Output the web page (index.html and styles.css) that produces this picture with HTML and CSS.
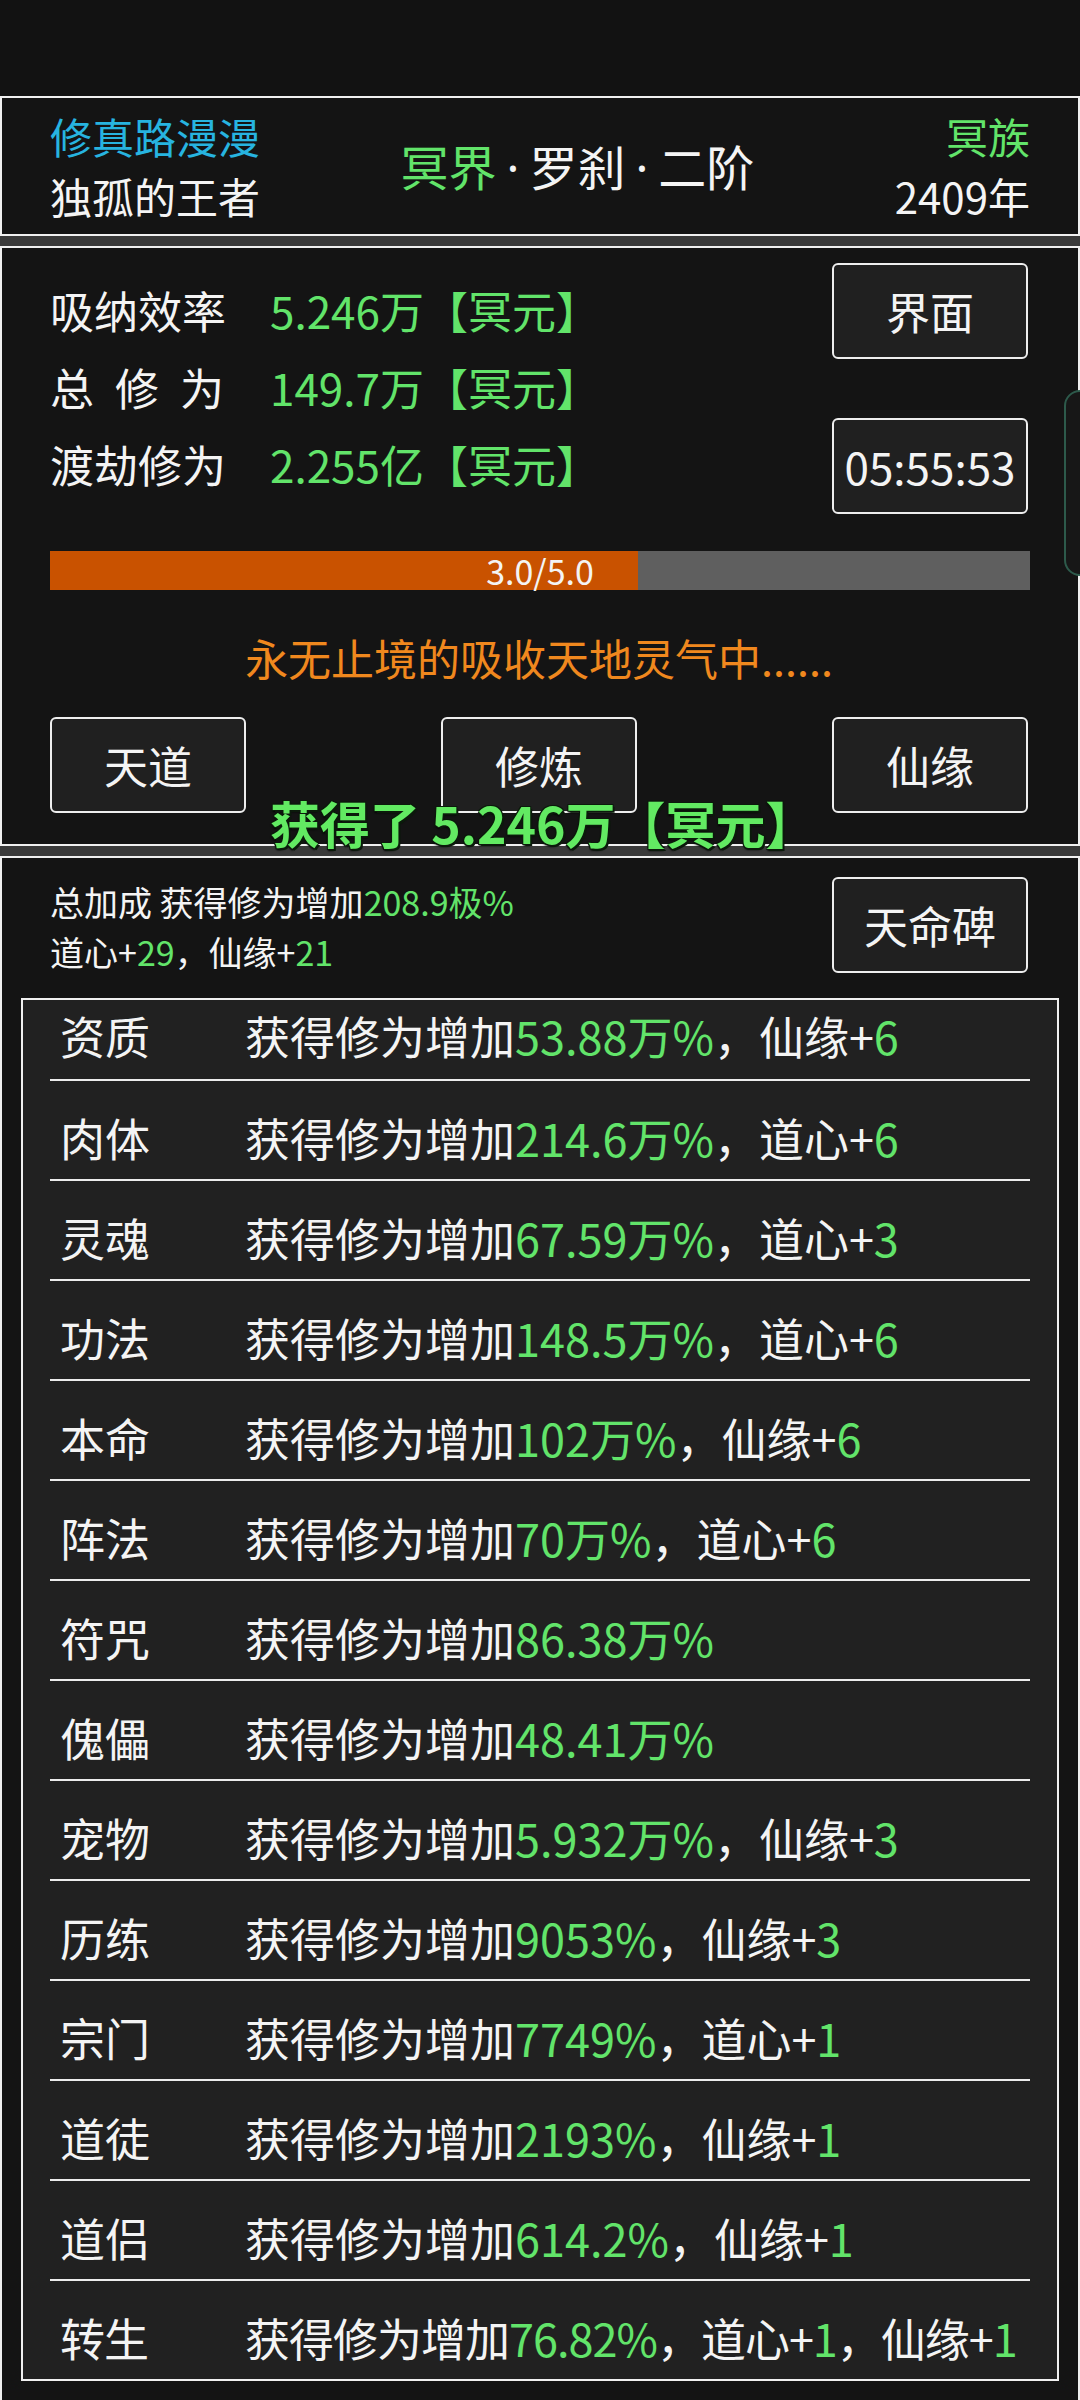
FILE: index.html
```html
<!DOCTYPE html>
<html lang="zh-CN">
<head>
    <meta charset="UTF-8">
    <meta name="viewport" content="width=device-width, initial-scale=1.0">
    <title>修真路漫漫</title>

    <link rel="stylesheet" href="styles.css">

</head>
<body>

    <div class="screen">

        <div class="status-bar"></div>

        <section class="panel head">
            <div class="head-side">
                <div class="cyan">修真路漫漫</div>
                <div>独孤的王者</div>
            </div>
            <div class="realm"><span class="green">冥界</span><span class="dot">·</span>罗刹<span class="dot">·</span>二阶</div>
            <div class="head-side right">
                <div class="green">冥族</div>
                <div>2409年</div>
            </div>
        </section>

        <div class="band"></div>

        <section class="panel cult">
            <div class="cult-top">
                <div class="stats">
                    <div class="stat"><span class="stat-label">吸纳效率</span><span class="green">5.246万【冥元】</span></div>
                    <div class="stat"><span class="stat-label spaced">总修为</span><span class="green">149.7万【冥元】</span></div>
                    <div class="stat"><span class="stat-label">渡劫修为</span><span class="green">2.255亿【冥元】</span></div>
                </div>
                <div class="btn-col">
                    <div class="btn">界面</div>
                    <div class="btn">05:55:53</div>
                </div>
            </div>

            <div class="progress">
                <div class="progress-fill" style="width: 60%"></div>
                <div class="progress-text">3.0/5.0</div>
            </div>

            <div class="message">永无止境的吸收天地灵气中......</div>

            <div class="btn-row">
                <div class="btn">天道</div>
                <div class="btn">修炼</div>
                <div class="btn">仙缘</div>
            </div>

            <div class="gain">获得了 5.246万【冥元】</div>
        </section>

        <div class="band"></div>

        <section class="panel bonus">
            <div class="bonus-top">
                <div class="bonus-sum">
                    <div>总加成 获得修为增加<span class="green">208.9极%</span></div>
                    <div>道心+<span class="green">29</span>，仙缘+<span class="green">21</span></div>
                </div>
                <div class="btn">天命碑</div>
            </div>

            <div class="bonus-list">
                <div class="bonus-row"><span class="row-name">资质</span><span>获得修为增加<span class="green">53.88万%</span>，仙缘+<span class="green">6</span></span></div>
                <div class="bonus-row"><span class="row-name">肉体</span><span>获得修为增加<span class="green">214.6万%</span>，道心+<span class="green">6</span></span></div>
                <div class="bonus-row"><span class="row-name">灵魂</span><span>获得修为增加<span class="green">67.59万%</span>，道心+<span class="green">3</span></span></div>
                <div class="bonus-row"><span class="row-name">功法</span><span>获得修为增加<span class="green">148.5万%</span>，道心+<span class="green">6</span></span></div>
                <div class="bonus-row"><span class="row-name">本命</span><span>获得修为增加<span class="green">102万%</span>，仙缘+<span class="green">6</span></span></div>
                <div class="bonus-row"><span class="row-name">阵法</span><span>获得修为增加<span class="green">70万%</span>，道心+<span class="green">6</span></span></div>
                <div class="bonus-row"><span class="row-name">符咒</span><span>获得修为增加<span class="green">86.38万%</span></span></div>
                <div class="bonus-row"><span class="row-name">傀儡</span><span>获得修为增加<span class="green">48.41万%</span></span></div>
                <div class="bonus-row"><span class="row-name">宠物</span><span>获得修为增加<span class="green">5.932万%</span>，仙缘+<span class="green">3</span></span></div>
                <div class="bonus-row"><span class="row-name">历练</span><span>获得修为增加<span class="green">9053%</span>，仙缘+<span class="green">3</span></span></div>
                <div class="bonus-row"><span class="row-name">宗门</span><span>获得修为增加<span class="green">7749%</span>，道心+<span class="green">1</span></span></div>
                <div class="bonus-row"><span class="row-name">道徒</span><span>获得修为增加<span class="green">2193%</span>，仙缘+<span class="green">1</span></span></div>
                <div class="bonus-row"><span class="row-name">道侣</span><span>获得修为增加<span class="green">614.2%</span>，仙缘+<span class="green">1</span></span></div>
                <div class="bonus-row tight"><span class="row-name">转生</span><span>获得修为增加<span class="green">76.82%</span>，道心+<span class="green">1</span>，仙缘+<span class="green">1</span></span></div>
            </div>
        </section>

        <div class="edge-tab"></div>

    </div>

</body>
</html>
```

FILE: styles.css
```css
*
{
    margin: 0;
    padding: 0;
    box-sizing: border-box;
}

body
{
    background: #121212;
    color: #f4f4f4;
    font-family: "Noto Sans CJK SC", "Noto Sans", sans-serif;
    overflow: hidden;
}

.screen
{
    width: 1080px;
    height: 2400px;
    position: relative;
    overflow: hidden;
}

.status-bar
{
    height: 96px;
}

.green
{
    color: #62e46a;
}

.cyan
{
    color: #27b4e0;
}

.panel
{
    border: 2px solid #f0f0f0;
    background: #141414;
}

.band
{
    height: 10px;
    background: #3a3a3a;
}

/* header */

.head
{
    height: 140px;
    padding: 0 48px;
    display: flex;
    align-items: center;
    justify-content: space-between;
}

.head-side
{
    font-size: 42px;
    line-height: 60px;
}

.head-side.right
{
    text-align: right;
}

.realm
{
    font-size: 48px;
    line-height: 60px;
}

.realm .dot
{
    font-family: "Noto Sans", sans-serif;
    padding: 0 10px;
}

/* cultivation panel */

.cult
{
    height: 600px;
    padding: 15px 50px 0 48px;
    position: relative;
}

.cult-top
{
    display: flex;
    justify-content: space-between;
    height: 251px;
}

.stats
{
    padding-top: 9px;
    font-size: 44px;
    line-height: 77px;
}

.stat-label
{
    display: inline-block;
    width: 220px;
}

.stat-label.spaced
{
    letter-spacing: 21px;
}

.btn-col
{
    display: flex;
    flex-direction: column;
    gap: 59px;
}

.btn
{
    width: 196px;
    height: 96px;
    border: 2px solid #eeeeee;
    border-radius: 6px;
    background: #202020;
    font-size: 44px;
    display: flex;
    align-items: center;
    justify-content: center;
}

.progress
{
    margin-top: 37px;
    margin-right: -2px;
    height: 39px;
    background: #5f5f5f;
    position: relative;
}

.progress-fill
{
    height: 100%;
    background: #c95200;
}

.progress-text
{
    position: absolute;
    left: 0;
    right: 0;
    top: 0;
    text-align: center;
    font-size: 34px;
    line-height: 39px;
}

.message
{
    margin-top: 37px;
    text-align: center;
    font-size: 43px;
    line-height: 60px;
    color: #f0881e;
}

.btn-row
{
    margin-top: 30px;
    display: flex;
    justify-content: space-between;
}

.gain
{
    position: absolute;
    left: 268px;
    top: 545px;
    z-index: 2;
    font-size: 50px;
    line-height: 58px;
    font-weight: 700;
    color: #62ea62;
    white-space: nowrap;
    text-shadow: 2px 2px 0 #0b1a0b, -1px -1px 0 #0b1a0b, 1px -1px 0 #0b1a0b, -1px 1px 0 #0b1a0b, 0 2px 2px #000;
}

/* bonus panel */

.bonus
{
    padding: 19px 19px 0 19px;
    height: 1560px;
    border-bottom: none;
}

.bonus-top
{
    display: flex;
    justify-content: space-between;
    padding: 0 31px 0 29px;
}

.bonus-sum
{
    font-size: 34px;
    line-height: 50px;
}

.bonus-list
{
    margin-top: 21px;
    border: 2px solid #f0f0f0;
    background: #212121;
}

.bonus-row
{
    margin: 0 27px;
    padding: 34px 0 18px 10px;
    border-bottom: 2px solid #ececec;
    display: flex;
    font-size: 45px;
    line-height: 46px;
    white-space: nowrap;
}

.bonus-row:first-child
{
    padding-top: 13px;
    padding-bottom: 20px;
}

.bonus-row:last-child
{
    border-bottom: none;
}

.bonus-row.tight
{
    letter-spacing: -1px;
}

.row-name
{
    width: 185px;
    flex: none;
}

.edge-tab
{
    position: absolute;
    left: 1064px;
    top: 390px;
    width: 40px;
    height: 186px;
    border: 2px solid #2d5a4b;
    border-radius: 16px;
    background: #171717;
}
```
